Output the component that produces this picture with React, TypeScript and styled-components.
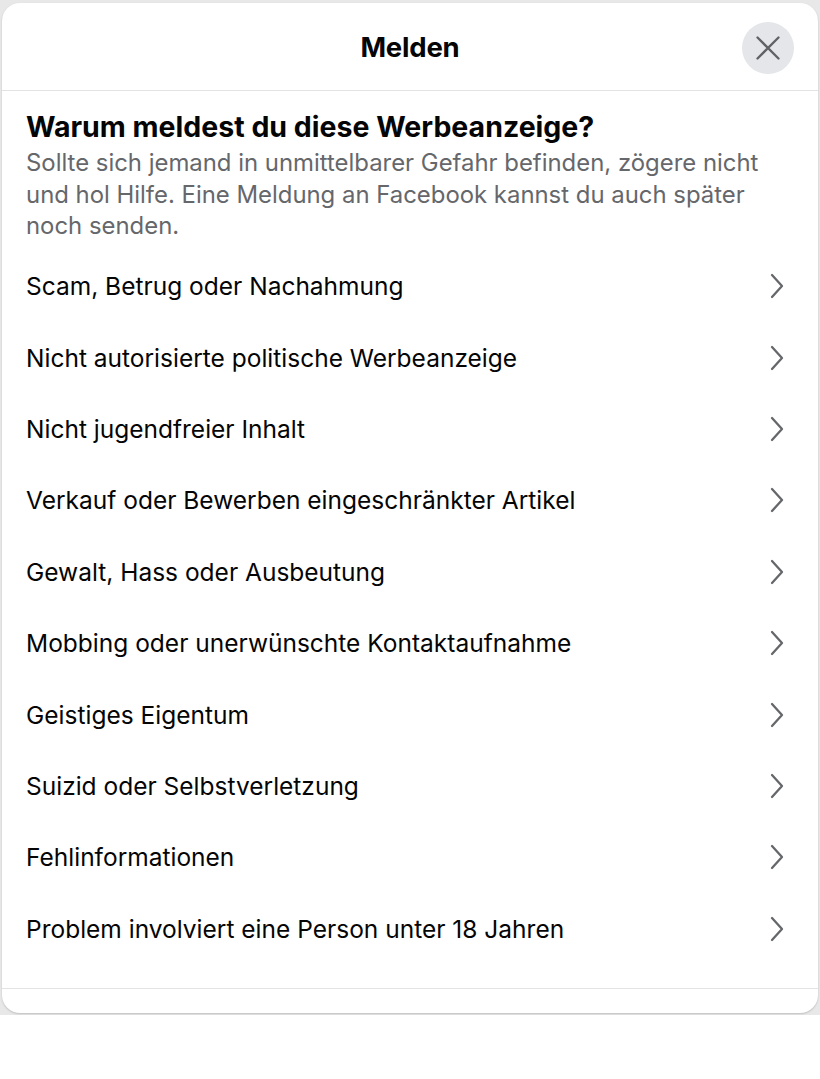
import React from "react";
import styled, { createGlobalStyle } from "styled-components";

const Global = createGlobalStyle`
  html, body { margin: 0; padding: 0; background: #ffffff; }
  body { font-family: Inter, "Liberation Sans", Arial, sans-serif; -webkit-font-smoothing: antialiased; }
`;

const Backdrop = styled.div`
  background: #e8e8e8;
  padding: 3px 2px 3px 2px;
  height: 1015px;
  box-sizing: border-box;
`;

const Card = styled.div`
  background: #ffffff;
  border-radius: 18px;
  height: 1010px;
  display: flex;
  flex-direction: column;
  box-shadow: 0 1px 2px rgba(0, 0, 0, 0.18);
  overflow: hidden;
`;

const Header = styled.div`
  height: 87px;
  border-bottom: 1px solid #e3e3e3;
  display: flex;
  align-items: center;
  justify-content: center;
  position: relative;
  flex-shrink: 0;
`;

const Title = styled.h1`
  margin: 0;
  font-size: 27.5px;
  font-weight: 700;
  color: #050505;
  letter-spacing: -0.2px;
`;

const CloseButton = styled.button`
  position: absolute;
  right: 24px;
  top: 19px;
  width: 52px;
  height: 52px;
  border-radius: 50%;
  border: none;
  background: #e4e6e9;
  display: flex;
  align-items: center;
  justify-content: center;
  padding: 0;
`;

const Body = styled.div`
  flex: 1;
  padding: 19px 24px 0 24px;
  display: flex;
  flex-direction: column;
`;

const Heading = styled.h2`
  margin: 0;
  font-size: 28.5px;
  font-weight: 700;
  color: #050505;
  line-height: 34px;
`;

const Intro = styled.p`
  margin: 3px 0 0 0;
  font-size: 23.9px;
  line-height: 31.5px;
  color: #65676b;
`;

const List = styled.ul`
  list-style: none;
  margin: 9px 0 0 0;
  padding: 0;
`;

const Item = styled.li`
  height: 71.4px;
  display: flex;
  align-items: center;
  justify-content: space-between;
  font-size: 24.5px;
  color: #050505;
  padding-right: 10px;
`;

const Footer = styled.div`
  height: 24px;
  border-top: 1px solid #e3e3e3;
  flex-shrink: 0;
`;

const items = [
  "Scam, Betrug oder Nachahmung",
  "Nicht autorisierte politische Werbeanzeige",
  "Nicht jugendfreier Inhalt",
  "Verkauf oder Bewerben eingeschränkter Artikel",
  "Gewalt, Hass oder Ausbeutung",
  "Mobbing oder unerwünschte Kontaktaufnahme",
  "Geistiges Eigentum",
  "Suizid oder Selbstverletzung",
  "Fehlinformationen",
  "Problem involviert eine Person unter 18 Jahren",
];

const Chevron = () => (
  <svg width="14" height="26" viewBox="0 0 14 26" fill="none">
    <path d="M2 2 L12 13 L2 24" stroke="#65676b" strokeWidth="2.3" strokeLinecap="round" strokeLinejoin="round" />
  </svg>
);

export default function App() {
  return (
    <>
      <Global />
      <Backdrop>
        <Card>
          <Header>
            <Title>Melden</Title>
            <CloseButton aria-label="Schließen">
              <svg width="24" height="24" viewBox="0 0 24 24" fill="none">
                <path d="M1.5 1.5 L22.5 22.5 M22.5 1.5 L1.5 22.5" stroke="#606266" strokeWidth="2.3" strokeLinecap="round" />
              </svg>
            </CloseButton>
          </Header>
          <Body>
            <Heading>Warum meldest du diese Werbeanzeige?</Heading>
            <Intro>
              Sollte sich jemand in unmittelbarer Gefahr befinden, zögere nicht und hol Hilfe. Eine Meldung an
              Facebook kannst du auch später noch senden.
            </Intro>
            <List>
              {items.map((t) => (
                <Item key={t}>
                  <span>{t}</span>
                  <Chevron />
                </Item>
              ))}
            </List>
          </Body>
          <Footer />
        </Card>
      </Backdrop>
    </>
  );
}
